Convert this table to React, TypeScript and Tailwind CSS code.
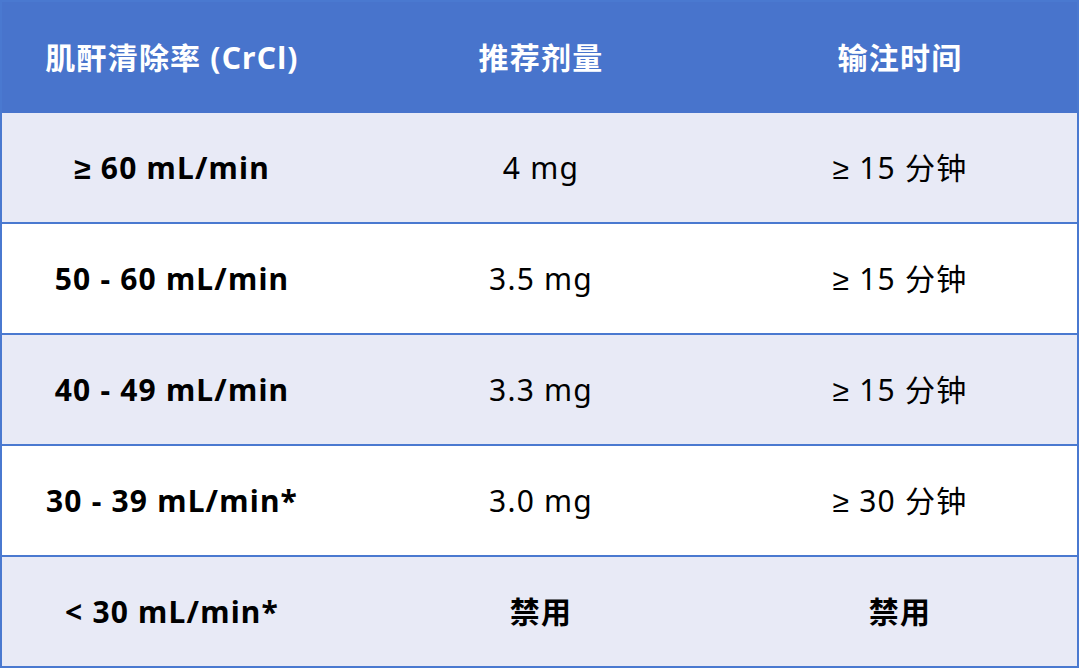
const rows = [
    { crcl: "≥ 60 mL/min", dose: "4 mg", time: "≥ 15 分钟", alt: true },
    { crcl: "50 - 60 mL/min", dose: "3.5 mg", time: "≥ 15 分钟", alt: false },
    { crcl: "40 - 49 mL/min", dose: "3.3 mg", time: "≥ 15 分钟", alt: true },
    { crcl: "30 - 39 mL/min*", dose: "3.0 mg", time: "≥ 30 分钟", alt: false },
    { crcl: "< 30 mL/min*", dose: "禁用", time: "禁用", alt: true, banned: true },
]

const App = () => {
    return (
        <div
            className="w-[1080px] h-[671px] bg-white"
            style={{ fontFamily: '"Noto Sans", "Liberation Sans", "Noto Sans CJK SC", sans-serif' }}
        >
            <div className="w-[1079px] border-x-2 border-t-2 border-[#4a79d0]">
                <div className="grid grid-cols-[340px_398px_320px] h-[111px] bg-[#4874cc] text-white text-[30px] tracking-[1.2px] font-bold items-center text-center">
                    <div>肌酐清除率 (CrCl)</div>
                    <div>推荐剂量</div>
                    <div>输注时间</div>
                </div>
                {rows.map((r, i) => (
                    <div
                        key={i}
                        className={
                            "grid grid-cols-[340px_398px_320px] h-[111px] border-b-2 border-[#4a79d0] items-center text-center text-[30px] tracking-[1.2px] text-black " +
                            (r.alt ? "bg-[#e8eaf6]" : "bg-white")
                        }
                    >
                        <div className="font-bold">{r.crcl}</div>
                        <div className={r.banned ? "font-bold" : ""}>{r.dose}</div>
                        <div className={r.banned ? "font-bold" : ""}>{r.time}</div>
                    </div>
                ))}
            </div>
        </div>
    )
}

export default App
